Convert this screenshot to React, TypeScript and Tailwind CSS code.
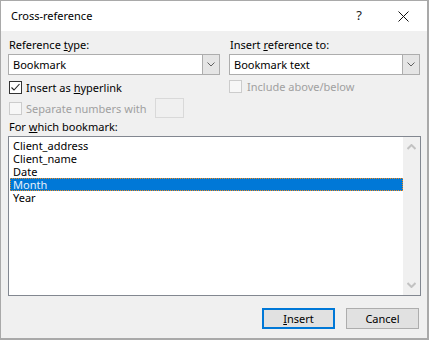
import React from 'react'

const items = ['Client_address', 'Client_name', 'Date', 'Month', 'Year']

function Chevron({ color = '#606060' }: { color?: string }) {
  return (
    <svg width="8" height="5" viewBox="0 0 8 5">
      <polyline points="0.5,0.5 4,4 7.5,0.5" fill="none" stroke={color} strokeWidth="1" />
    </svg>
  )
}

function Combo({ value }: { value: string }) {
  return (
    <div className="flex h-[21px] border border-[#adadad] bg-white">
      <div className="flex-1 pl-[4px] leading-[19px] text-black">{value}</div>
      <div className="flex w-[17px] items-center justify-center border-l border-[#adadad] bg-[#e5e5e5]">
        <Chevron />
      </div>
    </div>
  )
}

function Box({ checked, disabled }: { checked?: boolean; disabled?: boolean }) {
  return (
    <div
      className={
        disabled
          ? 'size-[13px] shrink-0 border border-[#cccccc] bg-[#f7f7f7]'
          : 'flex size-[13px] shrink-0 items-center justify-center border border-[#333333] bg-white'
      }
    >
      {checked && (
        <svg width="11" height="11" viewBox="0 0 11 11">
          <polyline points="1.5,5.5 4,8 9.5,2" fill="none" stroke="#222" strokeWidth="1.1" />
        </svg>
      )}
    </div>
  )
}

export default function App() {
  return (
    <div
      className="flex h-[340px] w-[429px] flex-col border border-b-2 border-r-2 border-[#a9a9a9] text-[11px] text-black"
      style={{ fontFamily: '"Segoe UI", "Noto Sans", sans-serif' }}
    >
      <div className="flex h-[30px] shrink-0 items-center bg-white pl-[10px]">
        <span className="flex-1 text-[11px]">Cross-reference</span>
        <span className="mr-[36px] text-[13px] text-[#222]">?</span>
        <svg className="mr-[18px]" width="11" height="11" viewBox="0 0 11 11">
          <line x1="0.5" y1="0.5" x2="10.5" y2="10.5" stroke="#111" strokeWidth="1" />
          <line x1="10.5" y1="0.5" x2="0.5" y2="10.5" stroke="#111" strokeWidth="1" />
        </svg>
      </div>

      <div className="flex flex-1 flex-col bg-[#f0f0f0] px-[7px] pt-[6px]">
        <div className="grid grid-cols-[212px_191px] gap-x-[9px]">
          <div className="flex flex-col">
            <div className="h-[16px] pl-[1px] leading-[16px]">
              Reference <u>t</u>ype:
            </div>
            <div className="mt-[1px]">
              <Combo value="Bookmark" />
            </div>
            <div className="mt-[6px] flex h-[13px] items-center gap-[4px] pl-[1px]">
              <Box checked />
              <span className="leading-[13px]">
                Insert as <u>h</u>yperlink
              </span>
            </div>
            <div className="mt-[4px] flex h-[20px] items-center pl-[1px]">
              <Box disabled />
              <span className="ml-[4px] leading-[13px] text-[#a0a0a0]">Separate numbers with</span>
              <div className="ml-[9px] h-[20px] w-[29px] border border-[#d9d9d9] bg-[#f0f0f0]" />
            </div>
          </div>
          <div className="flex flex-col">
            <div className="h-[16px] pl-[1px] leading-[16px]">
              Insert <u>r</u>eference to:
            </div>
            <div className="mt-[1px]">
              <Combo value="Bookmark text" />
            </div>
            <div className="mt-[5px] flex h-[13px] items-center gap-[5px]">
              <Box disabled />
              <span className="leading-[13px] text-[#a0a0a0]">Include above/below</span>
            </div>
          </div>
        </div>

        <div className="mt-[1px] h-[16px] pl-[1px] leading-[16px]">
          For <u>w</u>hich bookmark:
        </div>
        <div className="mt-[1px] flex h-[160px] w-[413px] border border-[#828790] bg-white">
          <div className="flex flex-1 flex-col pl-[1px] pt-[2px]">
            {items.map((it) =>
              it === 'Month' ? (
                <div
                  key={it}
                  className="h-[13px] border border-dotted border-[#f28a1c] bg-[#0078d7] pl-[2px] leading-[11px] text-[#e6f0fa]"
                >
                  {it}
                </div>
              ) : (
                <div key={it} className="h-[13px] pl-[3px] leading-[13px]">
                  {it}
                </div>
              )
            )}
          </div>
          <div className="flex w-[17px] flex-col items-center justify-between bg-[#f0f0f0] py-[7px]">
            <svg width="9" height="6" viewBox="0 0 9 6">
              <polyline points="0.5,5 4.5,1 8.5,5" fill="none" stroke="#c2c2c2" strokeWidth="2" />
            </svg>
            <svg width="9" height="6" viewBox="0 0 9 6">
              <polyline points="0.5,1 4.5,5 8.5,1" fill="none" stroke="#c2c2c2" strokeWidth="2" />
            </svg>
          </div>
        </div>

        <div className="mt-[12px] flex justify-end gap-[11px] pr-[1px]">
          <button className="h-[21px] w-[73px] border-2 border-[#0078d7] bg-[#e1e1e1] leading-[17px]">
            <u>I</u>nsert
          </button>
          <button className="h-[21px] w-[73px] border border-[#adadad] bg-[#e1e1e1] leading-[19px]">
            Cancel
          </button>
        </div>
      </div>
    </div>
  )
}
